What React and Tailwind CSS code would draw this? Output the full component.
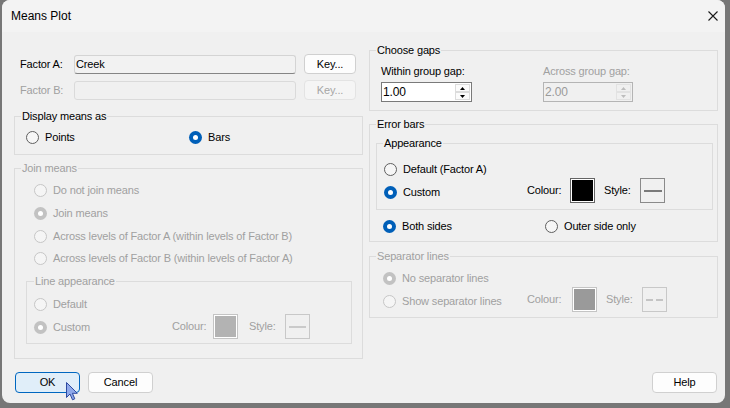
import React from "react";

function Radio({ checked, disabled }) {
  if (checked) {
    return (
      <span
        className={
          disabled
            ? "w-[13px] h-[13px] rounded-full bg-[#c2c2c2] flex items-center justify-center shrink-0"
            : "w-[13px] h-[13px] rounded-full bg-[#005fb8] flex items-center justify-center shrink-0"
        }
      >
        <span className="w-[5px] h-[5px] rounded-full bg-white" />
      </span>
    );
  }
  return (
    <span
      className={
        disabled
          ? "w-[13px] h-[13px] rounded-full border border-[#c6c6c6] bg-[#f5f5f5] shrink-0"
          : "w-[13px] h-[13px] rounded-full border border-[#5f5f5f] bg-[#f6f6f6] shrink-0"
      }
    />
  );
}

function Opt({ label, checked, disabled, w, h, extra }) {
  return (
    <div className={`flex items-center ${w || ""} ${h || "h-[16px]"} ${extra || ""}`}>
      <Radio checked={checked} disabled={disabled} />
      <span className={disabled ? "ml-[6px] text-[#a0a0a0] whitespace-nowrap" : "ml-[6px] whitespace-nowrap"}>
        {label}
      </span>
    </div>
  );
}

function Legend({ children, disabled }) {
  return (
    <legend
      className={
        disabled
          ? "ml-[6px] px-[1px] h-[13px] leading-[13px] text-[#a0a0a0]"
          : "ml-[6px] px-[1px] h-[13px] leading-[13px]"
      }
    >
      {children}
    </legend>
  );
}

function Swatch({ fill, disabled }) {
  return (
    <div
      className={
        disabled
          ? "w-[25px] h-[25px] border border-[#c4c4c4] p-[1px] bg-white shrink-0"
          : "w-[25px] h-[25px] border border-[#646464] p-[1px] bg-white shrink-0"
      }
    >
      <div className={`w-full h-full ${fill}`} />
    </div>
  );
}

function StyleBox({ disabled, dashed }) {
  return (
    <div
      className={
        disabled
          ? "w-[25px] h-[25px] border border-[#c8c8c8] bg-[#f0f0f0] flex items-center justify-center shrink-0"
          : "w-[25px] h-[25px] border border-[#8a8a8a] bg-[#f0f0f0] flex items-center justify-center shrink-0"
      }
    >
      {dashed ? (
        <div className="flex gap-[3px]">
          <div className="w-[7px] h-[2px] bg-[#c4c4c4]" />
          <div className="w-[7px] h-[2px] bg-[#c4c4c4]" />
        </div>
      ) : (
        <div className={disabled ? "w-[17px] h-[2px] bg-[#cacaca]" : "w-[18px] h-[2px] bg-[#7a7a7a]"} />
      )}
    </div>
  );
}

function Arrow({ up, color }) {
  return (
    <svg width="5" height="3" viewBox="0 0 5 3">
      {up ? <polygon points="0,3 5,3 2.5,0" fill={color} /> : <polygon points="0,0 5,0 2.5,3" fill={color} />}
    </svg>
  );
}

function Spin({ value, disabled, w }) {
  return (
    <div
      className={
        disabled
          ? `${w} h-[20px] border border-[#b4b4b4] bg-[#f0f0f0] flex`
          : `${w} h-[20px] border border-[#7a7a7a] bg-white flex`
      }
    >
      <span className={disabled ? "flex-1 pl-[1px] leading-[18px] text-[12px] text-[#9a9a9a]" : "flex-1 pl-[1px] leading-[18px] text-[12px]"}>
        {value}
      </span>
      <div className="w-[16px] flex flex-col py-[1px] pr-[1px]">
        <div className={disabled ? "h-[8px] border border-[#e2e2e2] flex items-center justify-center" : "h-[8px] border border-[#dcdcdc] bg-[#fbfbfb] flex items-center justify-center"}>
          <Arrow up color={disabled ? "#bdbdbd" : "#000"} />
        </div>
        <div className={disabled ? "h-[8px] border border-[#e2e2e2] flex items-center justify-center" : "h-[8px] border border-[#dcdcdc] bg-[#fbfbfb] flex items-center justify-center"}>
          <Arrow color={disabled ? "#bdbdbd" : "#000"} />
        </div>
      </div>
    </div>
  );
}

export default function App() {
  return (
    <div className="w-[730px] h-[408px] bg-[#777777] relative overflow-hidden font-['Liberation_Sans',Arial,sans-serif] text-[11px] tracking-[-0.15px] text-black">
      <div className="ml-[2px] w-[723px] h-[403px] bg-[#f0f0f0] rounded-[8px] overflow-hidden flex flex-col">
        {/* Title bar */}
        <div className="h-[32px] shrink-0 bg-[#f3f3f3] flex items-center justify-between pl-[9px] pr-[7px]">
          <span className="text-[12px] leading-[14px] tracking-normal">Means Plot</span>
          <svg width="10" height="10" viewBox="0 0 10 10">
            <path d="M0.5 0.5 L9.5 9.5 M9.5 0.5 L0.5 9.5" stroke="#1a1a1a" strokeWidth="1.1" />
          </svg>
        </div>

        {/* Body */}
        <div className="flex pl-[12px] gap-[6px]">
          {/* Left column */}
          <div className="w-[349px] flex flex-col">
            <div className="flex items-start mt-[22px] h-[20px]">
              <span className="w-[60px] pl-[6px] mt-[1px] leading-[19px]">Factor A:</span>
              <div className="w-[222px] h-[19px] mt-[1px] border border-[#d4d4d4] border-b-[#858585] rounded-[3px] bg-[#f2f2f2] pl-[1px] leading-[17px]">
                Creek
              </div>
              <div className="ml-[8px] w-[52px] h-[20px] border border-[#d0d0d0] rounded-[4px] bg-[#fdfdfd] flex items-center justify-center">
                Key...
              </div>
            </div>
            <div className="flex items-start mt-[6px] h-[20px]">
              <span className="w-[60px] pl-[6px] mt-[1px] leading-[19px] text-[#a0a0a0]">Factor B:</span>
              <div className="w-[222px] h-[19px] mt-[1px] border border-[#dadada] rounded-[3px] bg-[#f0f0f0]" />
              <div className="ml-[8px] w-[52px] h-[20px] border border-[#e3e3e3] rounded-[4px] bg-[#f5f5f5] flex items-center justify-center text-[#a6a6a6]">
                Key...
              </div>
            </div>

            <fieldset className="mt-[10px] border border-[#dcdcdc] pb-[9px]">
              <Legend>Display means as</Legend>
              <div className="pt-[6px] pl-[11px] flex">
                <Opt label="Points" w="w-[163px]" />
                <Opt label="Bars" checked />
              </div>
            </fieldset>

            <fieldset className="mt-[7px] border border-[#dcdcdc] pb-[14px]">
              <Legend disabled>Join means</Legend>
              <div className="pt-[4px] pl-[19px] flex flex-col">
                <Opt label="Do not join means" disabled h="h-[23px]" />
                <Opt label="Join means" disabled checked h="h-[23px]" />
                <Opt label="Across levels of Factor A (within levels of Factor B)" disabled h="h-[23px]" />
                <Opt label="Across levels of Factor B (within levels of Factor A)" disabled h="h-[21px]" />
              </div>
              <fieldset className="mt-[6px] ml-[11px] mr-[10px] border border-[#dcdcdc] pb-[4px]">
                <legend className="ml-[7px] px-[1px] h-[13px] leading-[13px] text-[#a0a0a0]">Line appearance</legend>
                <div className="pt-[7px] pl-[7px] flex flex-col">
                  <Opt label="Default" disabled h="h-[18px]" />
                  <div className="mt-[1px] h-[25px] flex items-center">
                    <Opt label="Custom" disabled checked w="w-[138px]" extra="mt-[2px]" />
                    <span className="w-[41px] text-[#a0a0a0]">Colour:</span>
                    <Swatch fill="bg-[#b3b3b3]" disabled />
                    <span className="ml-[11px] w-[36px] text-[#a0a0a0]">Style:</span>
                    <StyleBox disabled />
                  </div>
                </div>
              </fieldset>
            </fieldset>
          </div>

          {/* Right column */}
          <div className="w-[349px] flex flex-col">
            <fieldset className="mt-[12px] border border-[#dcdcdc] pb-[8px]">
              <Legend>Choose gaps</Legend>
              <div className="pt-[8px] pl-[11px] flex">
                <div className="w-[162px] flex flex-col">
                  <span className="leading-[13px]">Within group gap:</span>
                  <div className="mt-[4px]">
                    <Spin value="1.00" w="w-[91px]" />
                  </div>
                </div>
                <div className="flex flex-col">
                  <span className="leading-[13px] text-[#a0a0a0]">Across group gap:</span>
                  <div className="mt-[4px]">
                    <Spin value="2.00" disabled w="w-[90px]" />
                  </div>
                </div>
              </div>
            </fieldset>

            <fieldset className="mt-[7px] border border-[#dcdcdc] pb-[7px]">
              <Legend>Error bars</Legend>
              <fieldset className="mt-[6px] ml-[6px] mr-[4px] border border-[#dcdcdc] pb-[6px]">
                <Legend>Appearance</Legend>
                <div className="pt-[10px] pl-[7px] flex flex-col">
                  <Opt label="Default (Factor A)" h="h-[18px]" />
                  <div className="h-[25px] flex items-center">
                    <Opt label="Custom" checked w="w-[143px]" extra="mt-[3px]" />
                    <span className="w-[43px]">Colour:</span>
                    <Swatch fill="bg-black" />
                    <span className="ml-[9px] w-[36px]">Style:</span>
                    <StyleBox />
                  </div>
                </div>
              </fieldset>
              <div className="mt-[8px] pl-[13px] flex">
                <Opt label="Both sides" checked w="w-[162px]" />
                <Opt label="Outer side only" />
              </div>
            </fieldset>

            <fieldset className="mt-[8px] border border-[#dcdcdc] pb-[5px]">
              <Legend disabled>Separator lines</Legend>
              <div className="pt-[7px] pl-[13px] flex flex-col">
                <Opt label="No separator lines" disabled checked />
                <div className="mt-[1px] h-[25px] flex items-center">
                  <Opt label="Show separator lines" disabled w="w-[144px]" extra="mt-[3px]" />
                  <span className="w-[45px] text-[#a0a0a0]">Colour:</span>
                  <Swatch fill="bg-[#9a9a9a]" disabled />
                  <span className="ml-[9px] w-[36px] text-[#a0a0a0]">Style:</span>
                  <StyleBox disabled dashed />
                </div>
              </div>
            </fieldset>
          </div>
        </div>

        {/* Buttons */}
        <div className="mt-[13px] pl-[13px] pr-[8px] flex">
          <div className="w-[65px] h-[21px] border border-[#0067c0] rounded-[4px] bg-[#e0eef9] flex items-center justify-center">
            OK
          </div>
          <div className="ml-[8px] w-[65px] h-[21px] border border-[#d0d0d0] rounded-[4px] bg-[#fdfdfd] flex items-center justify-center">
            Cancel
          </div>
          <div className="ml-auto w-[65px] h-[21px] border border-[#d0d0d0] rounded-[4px] bg-[#fdfdfd] flex items-center justify-center">
            Help
          </div>
        </div>
      </div>

      {/* Mouse cursor */}
      <svg className="absolute left-[66px] top-[382px]" width="13" height="19" viewBox="0 0 13 19">
        <path
          d="M0.5 0.5 L0.5 15.5 L4 12 L6.5 17.8 L8.8 16.8 L6.4 11.3 L11.3 11.3 Z"
          fill="#8fa9ea"
          stroke="#2d4aa0"
          strokeWidth="1"
          strokeLinejoin="round"
        />
      </svg>
    </div>
  );
}
